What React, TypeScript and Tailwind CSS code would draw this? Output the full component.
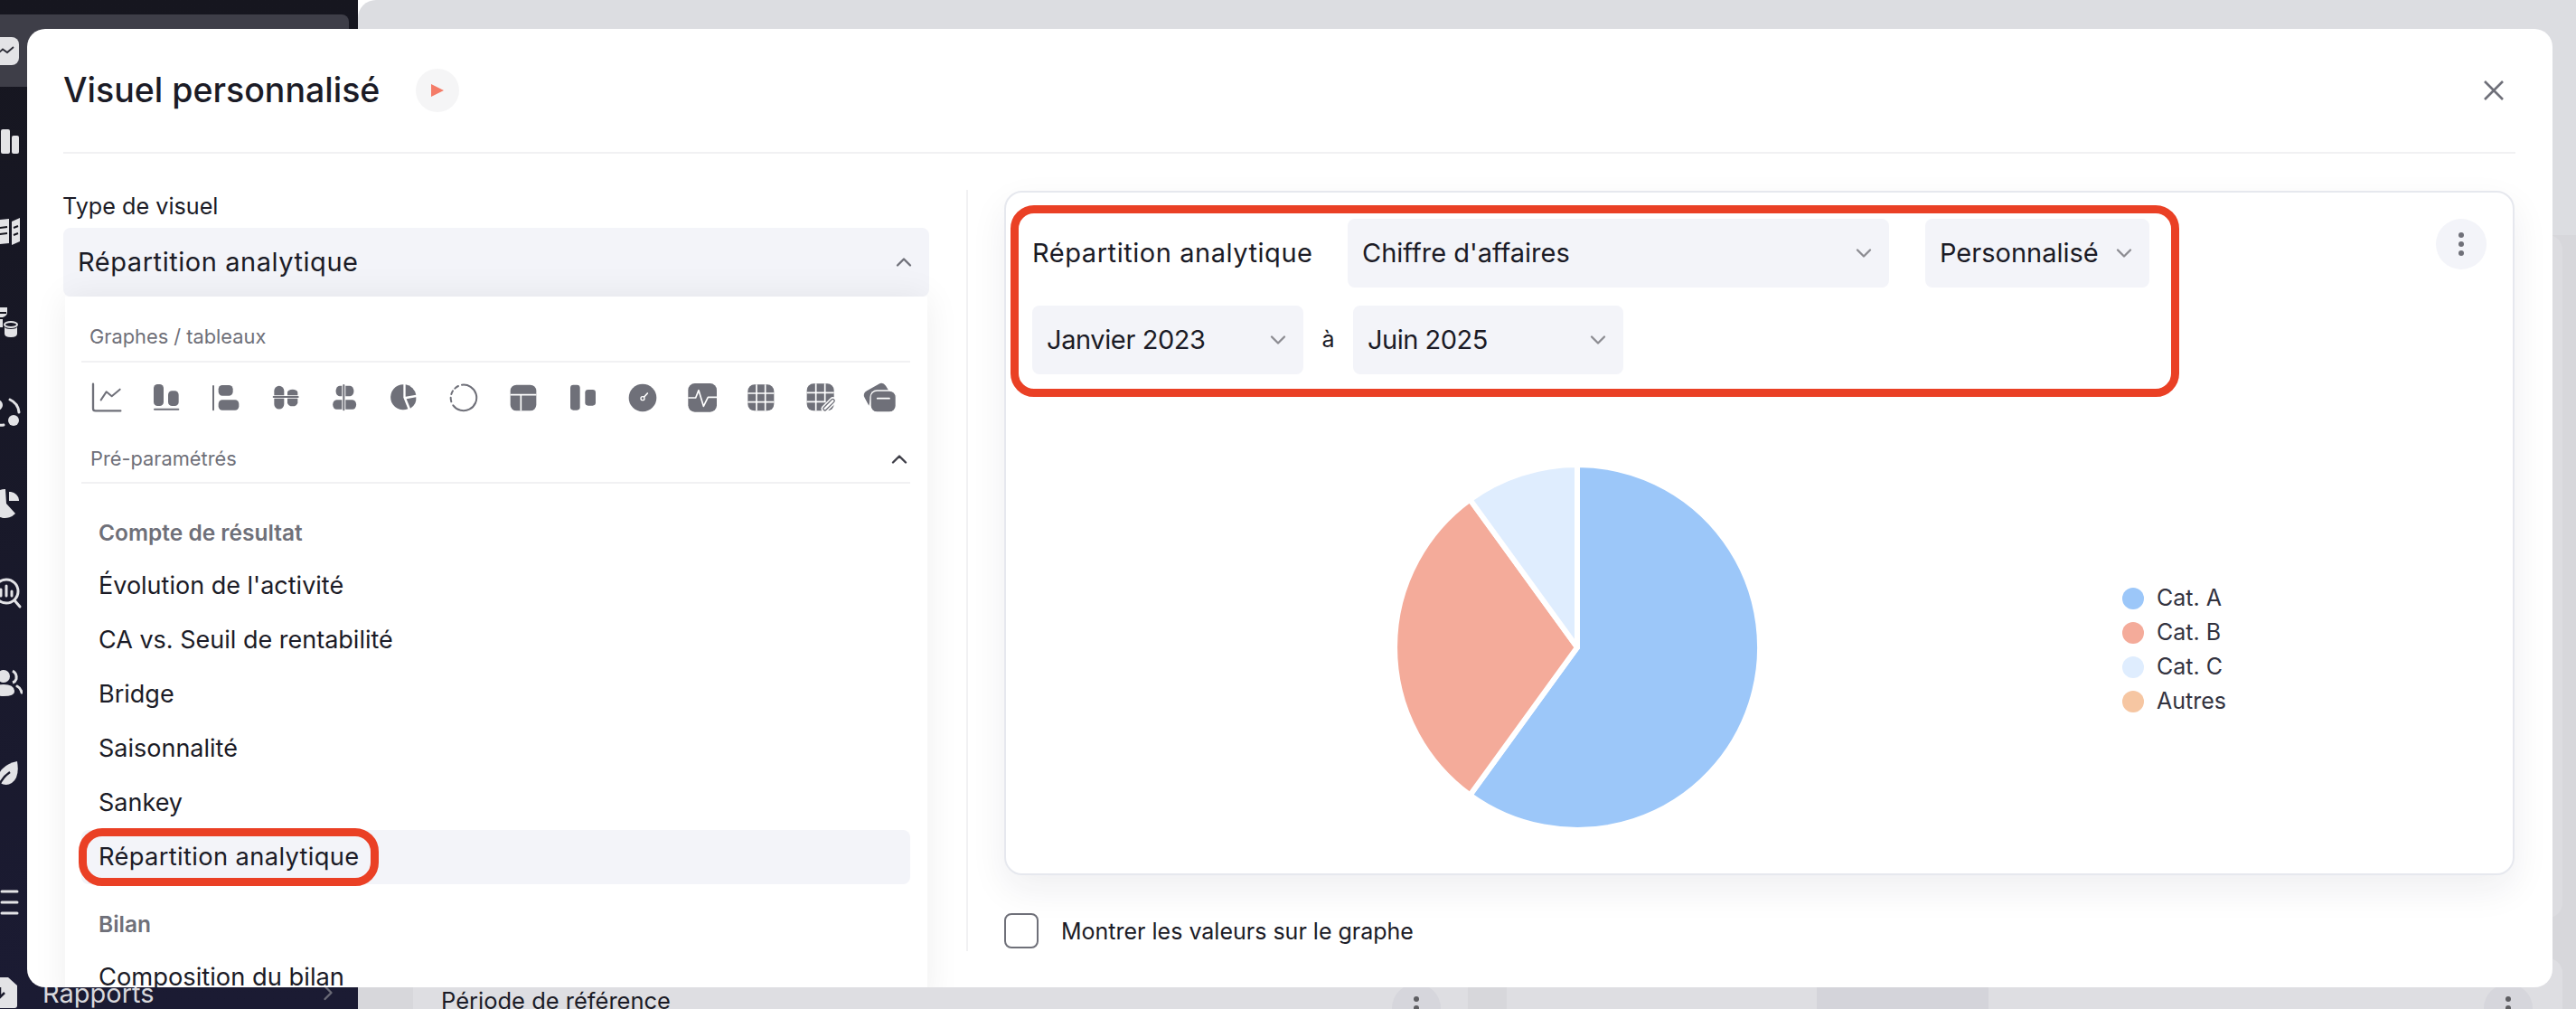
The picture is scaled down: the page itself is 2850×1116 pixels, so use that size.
import { ChevronDown, ChevronRight, ChevronUp } from "lucide-react"
import type { ReactNode } from "react"

const GREY = "#6f7079"
const SIDE = "#e3e3e6"

function Select({ label, className }: { label: string; className: string }) {
  return (
    <div className={`flex h-[76px] items-center justify-between rounded-lg bg-[#f3f4f9] pl-4 pr-[14px] text-[29px] ${className}`}>
      <span>{label}</span>
      <ChevronDown size={28} strokeWidth={2} color="#8c8c92" />
    </div>
  )
}

function ChartIcon({ box, children }: { box: string; children: ReactNode }) {
  return (
    <div className="flex w-[66px] justify-center">
      <svg width="32" height="32" viewBox={box} className="overflow-visible" fill={GREY}>
        {children}
      </svg>
    </div>
  )
}

function ChartIcons() {
  return (
    <div className="-ml-[5px] flex h-[78px] items-center">
      <ChartIcon box="66 72 96 96">
        <path d="M69 74V155a8 8 0 0 0 8 8H160" fill="none" stroke={GREY} strokeWidth="7" strokeLinecap="round" />
        <path d="M95 127L113 100L131 115L158 92" fill="none" stroke={GREY} strokeWidth="6" strokeLinecap="round" strokeLinejoin="round" />
      </ChartIcon>
      <ChartIcon box="264 72 96 96">
        <rect x="270" y="75" width="33" height="72" rx="13" />
        <rect x="318" y="97" width="35" height="50" rx="13" />
        <rect x="270" y="155" width="85" height="6" rx="3" />
      </ChartIcon>
      <ChartIcon box="462 72 96 96">
        <rect x="465" y="78" width="6" height="85" rx="3" />
        <rect x="485" y="78" width="48" height="35" rx="13" />
        <rect x="485" y="127" width="68" height="34" rx="13" />
      </ChartIcon>
      <ChartIcon box="660 72 96 96">
        <rect x="665" y="114" width="87" height="6" rx="3" />
        <path d="M670 112V97a16 16 0 0 1 33 0V112Z" />
        <path d="M714 112V102a17 10 0 0 1 34 0V112Z" />
        <path d="M670 122H703V141a16 16 0 0 1-33 0Z" />
        <path d="M714 122H748V136a17 12 0 0 1-34 0Z" />
      </ChartIcon>
      <ChartIcon box="858 72 96 96">
        <rect x="901" y="75" width="6" height="88" rx="3" />
        <path d="M898 80V115H890a12 17 0 0 1 0-35Z" />
        <path d="M898 127V158H880a12 15 0 0 1 0-31Z" />
        <path d="M910 80H925a12 17 0 0 1 0 35H910Z" />
        <path d="M910 127H933a12 15 0 0 1 0 31H910Z" />
      </ChartIcon>
      <ChartIcon box="1056 72 96 96">
        <path d="M1102 119L1102 76A42 42 0 1 0 1117 157Z" />
        <path d="M1109 76A42 42 0 0 1 1144 110L1109 116Z" />
        <path d="M1112 124L1144 118A38 38 0 0 1 1125 155Z" />
      </ChartIcon>
      <ChartIcon box="1254 72 96 96">
        <g fill="none" stroke={GREY} strokeWidth="6" strokeLinecap="round">
          <path d="M1296 77A43 43 0 1 1 1267 145" />
          <path d="M1261 133A43 43 0 0 1 1259 119" />
          <path d="M1261 108A43 43 0 0 1 1266 97" />
          <path d="M1273 89A43 43 0 0 1 1284 81" />
        </g>
      </ChartIcon>
      <ChartIcon box="72 72 96 96">
        <rect x="77" y="77" width="86" height="86" rx="20" />
        <path d="M77 110H163M112 110V163" stroke="#fff" strokeWidth="5" fill="none" />
      </ChartIcon>
      <ChartIcon box="270 72 96 96">
        <rect x="276" y="77" width="32" height="84" rx="10" />
        <rect x="325" y="93" width="35" height="53" rx="10" />
      </ChartIcon>
      <ChartIcon box="466 72 96 96">
        <circle cx="514" cy="120" r="46" />
        <circle cx="514" cy="122" r="6" fill="none" stroke="#fff" strokeWidth="4" />
        <path d="M519 117L530 105" stroke="#fff" strokeWidth="5" strokeLinecap="round" />
      </ChartIcon>
      <ChartIcon box="666 72 96 96">
        <rect x="667" y="72" width="95" height="95" rx="22" />
        <path d="M667 120H692L702 95L718 148L733 118H762" fill="none" stroke="#fff" strokeWidth="5" strokeLinejoin="round" />
      </ChartIcon>
      <ChartIcon box="864 72 96 96">
        <rect x="868" y="76" width="87" height="87" rx="22" />
        <path d="M868 105H955M868 134H955M897 76V163M926 76V163" stroke="#fff" strokeWidth="5" />
      </ChartIcon>
      <ChartIcon box="1060 72 96 96">
        <rect x="1062" y="73" width="90" height="90" rx="22" />
        <path d="M1062 103H1152M1062 133H1125M1092 73V163M1122 73V133" stroke="#fff" strokeWidth="5" />
        <path d="M1122 156L1148 130" stroke="#fff" strokeWidth="24" strokeLinecap="round" />
        <path d="M1122 156L1148 130" stroke={GREY} strokeWidth="15" strokeLinecap="round" />
        <path d="M1122 156L1148 130" stroke="#fff" strokeWidth="7" strokeLinecap="round" />
      </ChartIcon>
      <ChartIcon box="1262 72 96 96">
        <path d="M1305 74L1265 97Q1250 106 1258 120L1272 146L1282 100H1340L1328 80Q1318 66 1305 74Z" />
        <rect x="1277" y="96" width="85" height="72" rx="22" stroke="#fff" strokeWidth="4" />
        <path d="M1300 122H1340" stroke="#fff" strokeWidth="5" strokeLinecap="round" />
      </ChartIcon>
    </div>
  )
}

function SideIcon({ children }: { children: ReactNode }) {
  return (
    <svg width="36" height="36" viewBox="0 0 36 36" fill={SIDE} className="-ml-[11px] shrink-0">
      {children}
    </svg>
  )
}

function SideRow({ children }: { children: ReactNode }) {
  return <div className="flex h-[100px] shrink-0 items-center">{children}</div>
}

function Sidebar() {
  return (
    <aside className="flex w-[396px] shrink-0 flex-col bg-gradient-to-b from-[#16161f] to-[#1b1b33] pt-4">
      <div className="mr-[10px] flex h-20 shrink-0 items-center rounded-tr-lg bg-[#3e3e48]">
        <div className="-ml-3 flex h-[31px] w-[33px] items-center justify-center rounded-lg bg-[#e3e3e6]">
          <svg width="33" height="31" viewBox="0 0 33 31" fill="none" stroke="#2b2b35" strokeWidth="1.8">
            <path d="M11 17L15 13.5L20 17L27 11" />
          </svg>
        </div>
      </div>
      <div className="mt-[10px]" />
      <SideRow>
        <SideIcon>
          <rect x="12" y="5" width="10" height="27" rx="2" />
          <rect x="24" y="12" width="8" height="20" rx="2" />
        </SideIcon>
      </SideRow>
      <SideRow>
        <SideIcon>
          <path d="M2 6L21 4V31L2 33Z" />
          <path d="M24 7L33 3V29L24 33Z" />
          <path d="M26 14L31 12M26 22L31 20" stroke="#16161f" strokeWidth="2" />
          <path d="M10 14L19 13M10 21L19 20" stroke="#16161f" strokeWidth="2" />
        </SideIcon>
      </SideRow>
      <SideRow>
        <SideIcon>
          <ellipse cx="23" cy="21" rx="7" ry="3" fill="none" stroke={SIDE} strokeWidth="2" />
          <path d="M16 23V31Q16 35 23 35T30 31V23Q30 26 23 26T16 23Z" />
          <path d="M4 2H19V8Q19 11 14 13Q14 13 14 18V24H4Z" />
          <path d="M5 8H18M5 14H14" stroke="#16161f" strokeWidth="2" />
        </SideIcon>
      </SideRow>
      <SideRow>
        <SideIcon>
          <path d="M22 4Q31 8 32 18" fill="none" stroke={SIDE} strokeWidth="3" strokeLinecap="round" />
          <circle cx="26" cy="27" r="6" />
          <circle cx="8" cy="10" r="6" />
          <path d="M2 30Q10 33 15 32" fill="none" stroke={SIDE} strokeWidth="3" strokeLinecap="round" />
        </SideIcon>
      </SideRow>
      <SideRow>
        <SideIcon>
          <path d="M17 3A16 16 0 1 0 28 30L18 19Z" />
          <path d="M21 6H23A10 10 0 0 1 32 15V16H21Z" />
        </SideIcon>
      </SideRow>
      <SideRow>
        <SideIcon>
          <circle cx="18" cy="16" r="13" fill="none" stroke={SIDE} strokeWidth="3" />
          <path d="M27 26L33 33" stroke={SIDE} strokeWidth="3" strokeLinecap="round" />
          <path d="M12 14V21M18 10V21M24 16V21" stroke={SIDE} strokeWidth="3" strokeLinecap="round" />
        </SideIcon>
      </SideRow>
      <SideRow>
        <SideIcon>
          <circle cx="15" cy="10" r="7" />
          <path d="M3 27Q3 19 15 19T27 27Q27 32 15 32T3 27Z" />
          <path d="M25 4Q30 7 29 13Q28 16 25 17" fill="none" stroke={SIDE} strokeWidth="3" />
          <path d="M30 21Q34 23 35 28" fill="none" stroke={SIDE} strokeWidth="3" strokeLinecap="round" />
        </SideIcon>
      </SideRow>
      <SideRow>
        <SideIcon>
          <path d="M30 4Q33 22 24 28Q18 32 11 28Q6 20 14 12Q20 6 30 4Z" />
          <path d="M9 33Q13 22 22 16" fill="none" stroke="#1a1a2c" strokeWidth="2.5" />
        </SideIcon>
      </SideRow>
      <div className="mt-[42px]" />
      <SideRow>
        <SideIcon>
          <path d="M13 6H30M13 18H30M13 30H30" stroke={SIDE} strokeWidth="3" strokeLinecap="round" />
        </SideIcon>
      </SideRow>
      <div className="flex h-[100px] shrink-0 items-center">
        <SideIcon>
          <path d="M2 1H20L30 10V32Q30 35 27 35H2Z" />
          <path d="M11 12V23M6 18L11 23L16 18" fill="none" stroke="#1a1a2c" strokeWidth="2.5" />
        </SideIcon>
        <span className="ml-[22px] w-[300px] text-[29px] leading-none text-[#d8d8dc]">Rapports</span>
        <ChevronRight size={28} strokeWidth={2} color="#6a6a76" className="ml-[2px]" />
      </div>
    </aside>
  )
}

function Kebab({ className, dot }: { className: string; dot: string }) {
  return (
    <div className={`flex flex-col items-center justify-center gap-1 rounded-full ${className}`}>
      <span className={`h-[6px] w-[6px] rounded-full ${dot}`} />
      <span className={`h-[6px] w-[6px] rounded-full ${dot}`} />
      <span className={`h-[6px] w-[6px] rounded-full ${dot}`} />
    </div>
  )
}

function Background() {
  return (
    <main className="flex min-w-0 flex-1 flex-col rounded-tl-[20px] bg-[#dcdde1]">
      <div className="h-[260px] shrink-0" />
      <div className="flex flex-1 gap-[43px] bg-[#d7d7db] pl-[61px] pr-[15px]">
        <div className="flex w-[1167px] shrink-0 items-start justify-between bg-[#dedee2] pl-[31px] pr-[30px] pt-[828px]">
          <span className="text-[25.5px] leading-[38px]">Période de référence</span>
          <Kebab className="h-[54px] w-[54px] bg-[#d6d6dc]" dot="bg-[#5e5e62]" />
        </div>
        <div className="flex flex-1 flex-col gap-[45px]">
          <div className="h-[755px] shrink-0 rounded-r-[16px] bg-[#dcdce0]" />
          <div className="flex flex-1 items-start justify-between rounded-tr-[16px] bg-[#dedee2] pl-[343px] pr-[33px] pt-[28px]">
            <div className="h-10 w-[190px] bg-[#d4d4da]" />
            <Kebab className="h-[54px] w-[54px] bg-[#d6d6dc]" dot="bg-[#5e5e62]" />
          </div>
        </div>
      </div>
    </main>
  )
}

const presets = ["Évolution de l'activité", "CA vs. Seuil de rentabilité", "Bridge", "Saisonnalité", "Sankey"]

function LeftColumn() {
  return (
    <div className="w-[958px] shrink-0 pt-10">
      <div className="mb-[6px] h-9 -ml-px text-[25.2px] leading-9">Type de visuel</div>
      <div className="flex h-[76px] items-center justify-between rounded-lg bg-[#f3f4f9] pl-4 pr-[14px] text-[29px] tracking-[0.55px]">
        <span>Répartition analytique</span>
        <ChevronUp size={28} strokeWidth={2} color={GREY} />
      </div>
      <div className="mx-[2px] bg-white pl-[18px] pr-[19px] pt-[29px] shadow-[0_0_36px_rgba(0,0,0,0.07)]">
        <div className="flex h-[44px] border-b-2 border-[#f1f1f3] pl-[9px] text-[21.8px] leading-[30px] text-[#6f7079]">
          Graphes / tableaux
        </div>
        <ChartIcons />
        <div className="mt-[13px] flex h-[43px] items-start justify-between border-b-2 border-[#f1f1f3] pl-[10px] text-[21.8px] leading-[30px] text-[#6f7079]">
          <span>Pré-paramétrés</span>
          <ChevronUp size={28} strokeWidth={2} color="#3f3f48" className="-mr-[2px] mt-[2px]" />
        </div>
        <div className="mt-[26px] flex h-[57px] items-center pl-[19px] text-[24.5px] font-semibold text-[#6f7079]">Compte de résultat</div>
        {presets.map((name) => (
          <div key={name} className="flex h-[60px] items-center pl-[19px] text-[27px]">
            {name}
          </div>
        ))}
        <div className="relative flex h-[60px] items-center rounded-lg bg-[#f3f4f9] pl-[19px] text-[27.3px] tracking-[0.35px]">
          Répartition analytique
          <div className="pointer-events-none absolute -left-[3px] -top-[2px] h-16 w-[332px] rounded-[26px] border-[9px] border-[#ea4025]" />
        </div>
        <div className="mt-[15px] flex h-[58px] items-center pl-[19px] text-[24.5px] font-semibold text-[#6f7079]">Bilan</div>
        <div className="flex h-[60px] items-center pl-[19px] text-[27.3px]">Composition du bilan</div>
      </div>
    </div>
  )
}

const legend = [
  { label: "Cat. A", color: "bg-[#9cc7f9]" },
  { label: "Cat. B", color: "bg-[#f4ab9a]" },
  { label: "Cat. C", color: "bg-[#dfedfe]" },
  { label: "Autres", color: "bg-[#f6c6a2]" },
]

function ChartCard() {
  return (
    <div className="relative mt-[41px] h-[757px] w-[1671px] rounded-[20px] border-2 border-[#e6e8ee] bg-white shadow-[0_16px_40px_rgba(30,30,60,0.07)]">
      <div className="ml-[5px] mt-[14px] flex h-[212px] w-[1293px] flex-col gap-5 rounded-[26px] border-[9px] border-[#ea4025] pl-[15px] pt-[6px]">
        <div className="flex items-center gap-10">
          <span className="w-[309px] shrink-0 whitespace-nowrap text-[29px] tracking-[0.55px]">Répartition analytique</span>
          <Select label="Chiffre d'affaires" className="w-[599px]" />
          <Select label="Personnalisé" className="w-[248px]" />
        </div>
        <div className="flex items-center">
          <Select label="Janvier 2023" className="w-[300px] tracking-[-0.4px]" />
          <span className="w-[55px] text-center text-[25px]">à</span>
          <Select label="Juin 2025" className="w-[299px] tracking-[-0.5px]" />
        </div>
      </div>
      <Kebab className="absolute right-[29px] top-[29px] h-14 w-14 bg-[#f3f4f9]" dot="bg-[#6f7079]" />
      <div className="ml-[427px] mt-[72px] flex items-center">
        <svg width="410" height="410" viewBox="0 0 410 410" stroke="#fff" strokeWidth="6" strokeLinejoin="round">
          <path d="M205 205L205 3A202 202 0 1 1 86.3 368.4Z" fill="#9cc7f9" />
          <path d="M205 205L86.3 368.4A202 202 0 0 1 86.3 41.6Z" fill="#f4ab9a" />
          <path d="M205 205L86.3 41.6A202 202 0 0 1 205 3Z" fill="#dfedfe" />
        </svg>
        <div className="ml-[398px] mt-[6px] flex flex-col">
          {legend.map((item) => (
            <div key={item.label} className="flex h-[38px] items-center gap-[14px] text-[25px] text-[#33333f]">
              <span className={`h-6 w-6 rounded-full ${item.color}`} />
              {item.label}
            </div>
          ))}
        </div>
      </div>
    </div>
  )
}

export default function App() {
  return (
    <div className="relative flex h-[1116px] w-[2850px] overflow-hidden font-[Inter,sans-serif] text-[#1b1b26]">
      <Sidebar />
      <Background />

      {/* modal */}
      <div className="absolute left-[30px] top-8 flex h-[1060px] w-[2794px] flex-col overflow-hidden rounded-[20px] bg-white pl-10 pr-[41px]">
        <div className="flex h-[138px] shrink-0 items-center justify-between border-b-2 border-[#f1f1f3]">
          <div className="flex items-center gap-[40px]">
            <h1 className="text-[37.5px] font-medium">Visuel personnalisé</h1>
            <div className="flex h-12 w-12 items-center justify-center rounded-full bg-[#f5f5f6]">
              <svg width="14" height="14" viewBox="0 0 14 14" fill="#f47c68">
                <path d="M0 0L14 7L0 14Z" />
              </svg>
            </div>
          </div>
          <svg width="22" height="22" viewBox="0 0 22 22" stroke={GREY} strokeWidth="2.6" className="mr-[13px]">
            <path d="M1 1L21 21M21 1L1 21" />
          </svg>
        </div>

        <div className="flex min-h-0 flex-1">
          <LeftColumn />
          <div className="ml-[41px] mt-10 h-[842px] w-[2px] shrink-0 bg-[#f1f1f3]" />
          <div className="ml-10">
            <ChartCard />
            <label className="mt-[42px] flex items-center gap-[25px] text-[25px]">
              <span className="h-[39px] w-[38px] rounded-lg border-2 border-[#6f7079]" />
              <span className="mt-[2px]">Montrer les valeurs sur le graphe</span>
            </label>
          </div>
        </div>
      </div>
    </div>
  )
}
